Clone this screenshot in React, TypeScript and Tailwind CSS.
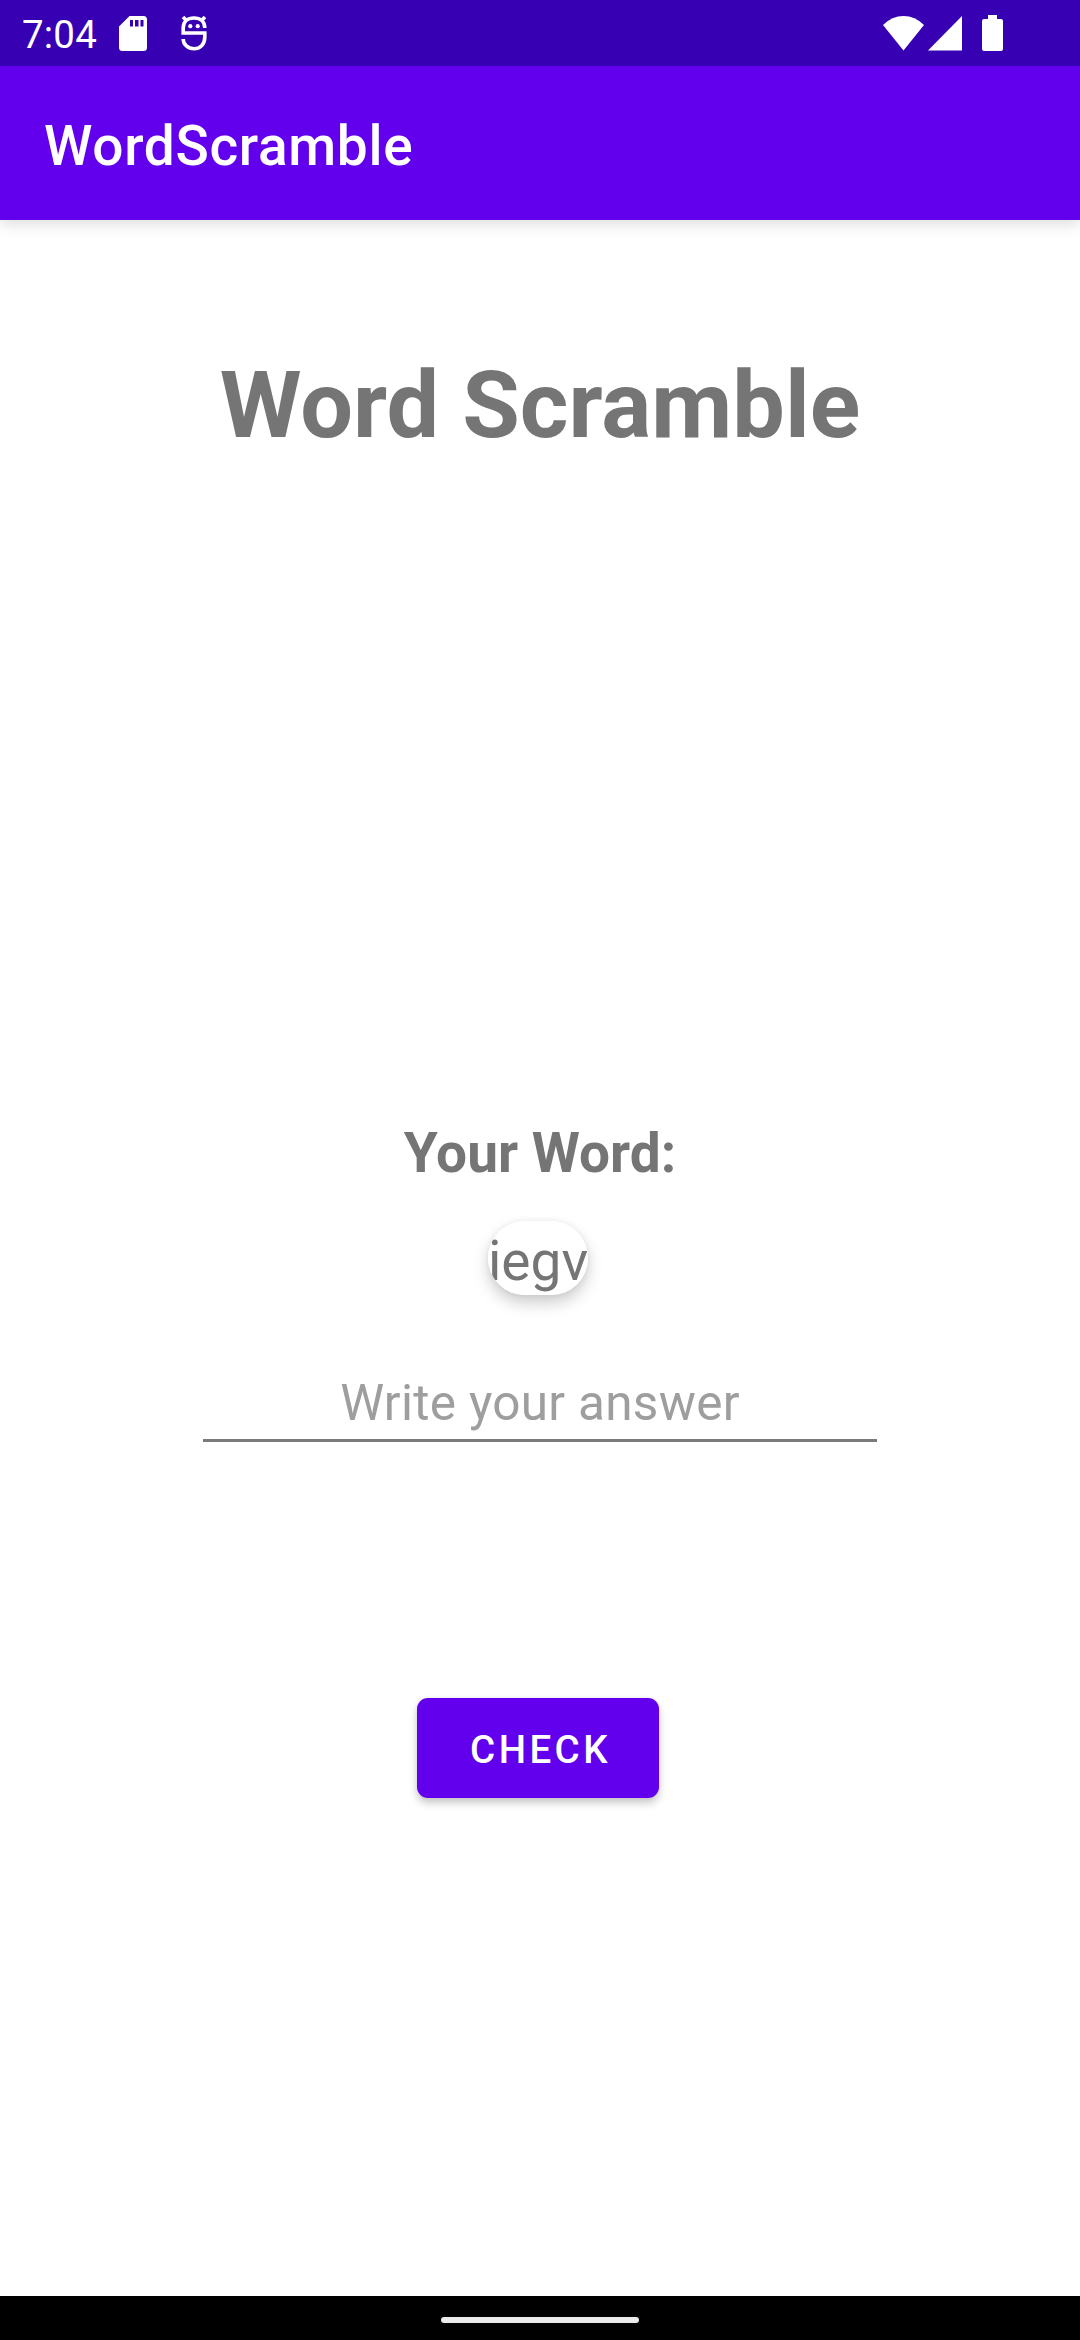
function StatusBar() {
  return (
    <header className="relative z-10 flex h-[66px] items-center bg-[#3700b3] text-white">
      <span className="mt-[3px] ml-[22px] w-[76px] text-[38.5px] leading-[45px] tracking-[0.2px]">7:04</span>
      <svg className="ml-[21px] h-[35px] w-[28px]" viewBox="0 0 28 35" fill="currentColor">
        <path fillRule="evenodd" d="M10.500 0H24.500Q28 0 28 3.500V31.500Q28 35 24.500 35H3.500Q0 35 0 31.500V10.500ZM11 4V10.500H14V4ZM16 4V10.500H19.500V4ZM21.500 4V10.500H24.500V4Z" />
      </svg>
      <svg className="ml-[34px] h-[36px] w-[26px]" viewBox="0 0 26 36" fill="none" stroke="currentColor" strokeWidth="3.600">
        <path d="M23.800 13C23.800 6.500 19.500 3 13 3S2.200 6.500 2.200 13V18H23.800V22C23.800 29.500 19 33.700 13 33.700S2.200 29.500 2.200 24" />
        <path d="M2 2L6 6M24 2L20 6" />
        <circle cx="9.300" cy="11.200" r="2.100" fill="currentColor" stroke="none" />
        <circle cx="16.700" cy="11.200" r="2.100" fill="currentColor" stroke="none" />
      </svg>
      <svg className="ml-auto h-[35px] w-[41px]" viewBox="0 0 41 35" fill="currentColor">
        <path d="M0 9Q9 0 20.500 0T41 9L20.500 34.500Z" />
      </svg>
      <svg className="ml-[4px] h-[35px] w-[34px]" viewBox="0 0 34 35" fill="currentColor">
        <path d="M34 0V34.500H0Z" />
      </svg>
      <svg className="mr-[77px] ml-[20px] h-[36px] w-[21px]" viewBox="0 0 21 36" fill="currentColor">
        <path d="M6 0H15V4H19Q21 4 21 6V34Q21 36 19 36H2Q0 36 0 34V6Q0 4 2 4H6Z" />
      </svg>
    </header>
  );
}

export default function App() {
  return (
    <div className="flex h-[2340px] w-[1080px] flex-col bg-white font-['Roboto',sans-serif] text-[#757575]">
      <StatusBar />
      <div className="flex h-[154px] items-center bg-[#6200ee] pl-[44px] shadow-[0_4px_14px_rgba(0,0,0,0.14)]">
        <h1 className="mt-[6px] text-[55px] leading-[64px] font-medium tracking-[0.68px] text-white">WordScramble</h1>
      </div>
      <main className="flex flex-1 flex-col items-center">
        <h2 className="mt-[130px] text-[93.5px] leading-[110px] font-bold">Word Scramble</h2>
        <p className="mt-[661px] text-[55px] leading-[64px] font-bold">Your Word:</p>
        <div className="mt-[36px] mr-[4px] h-[74px] w-[100px] rounded-[37px] shadow-[0_8px_16px_rgba(0,0,0,0.2),0_0_6px_rgba(0,0,0,0.06)]">
          <div className="flex h-full w-full justify-center overflow-hidden rounded-[37px] bg-white pt-[8px] text-[55px] leading-[64px]">iegv</div>
        </div>
        <input
          className="mt-[70px] h-[77px] w-[674px] border-b-[3px] border-[#7b7b7b] pt-[2px] text-center text-[49.5px] leading-[58px] tracking-[0.3px] outline-none placeholder:text-[#9e9e9e] placeholder:opacity-100"
          placeholder="Write your answer"
          aria-label="Write your answer"
        />
        <button className="mt-[256px] mr-[4px] h-[100px] w-[242px] rounded-[11px] bg-[#6200ee] pt-[3px] pl-[5px] text-[38.5px] leading-[45px] font-medium tracking-[0.0893em] text-white shadow-[0_5px_8px_rgba(0,0,0,0.22),0_0_4px_rgba(0,0,0,0.06)]">
          CHECK
        </button>
      </main>
      <footer className="flex h-[44px] items-center justify-center bg-black">
        <div className="mt-[4px] h-[6px] w-[198px] rounded-full bg-[#ebebeb]" />
      </footer>
    </div>
  );
}
